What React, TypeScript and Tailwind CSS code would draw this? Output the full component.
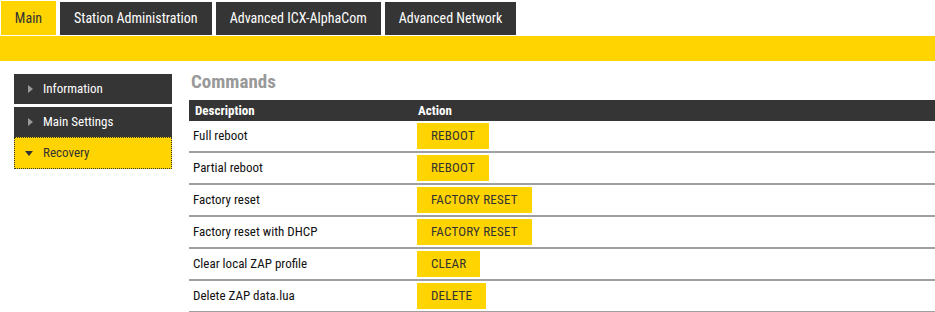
import React from 'react';

const tabs = ['Main', 'Station Administration', 'Advanced ICX-AlphaCom', 'Advanced Network'];

const rows = [
  { desc: 'Full reboot', action: 'REBOOT' },
  { desc: 'Partial reboot', action: 'REBOOT' },
  { desc: 'Factory reset', action: 'FACTORY RESET' },
  { desc: 'Factory reset with DHCP', action: 'FACTORY RESET' },
  { desc: 'Clear local ZAP profile', action: 'CLEAR' },
  { desc: 'Delete ZAP data.lua', action: 'DELETE' },
];

function Caret({ open }: { open?: boolean }) {
  if (open) {
    return (
      <svg width="8" height="5" viewBox="0 0 8 5" className="mr-[10px]">
        <path d="M0 0H8L4 5Z" fill="#333" />
      </svg>
    );
  }
  return (
    <svg width="5" height="8" viewBox="0 0 5 8" className="mr-[10px]">
      <path d="M0 0V8L5 4Z" fill="#9a9a9a" />
    </svg>
  );
}

export default function App() {
  return (
    <div
      className="w-[935px] h-[312px] bg-white text-[#222] overflow-hidden"
      style={{ fontFamily: '"Roboto Condensed", "Liberation Sans Narrow", Roboto, sans-serif' }}
    >
      {/* top tabs */}
      <div className="flex items-end h-[35px] pt-[1px] pl-[1px] gap-[4px]">
        {tabs.map((t, i) =>
          i === 0 ? (
            <div key={t} className="h-[34px] w-[55px] bg-[#ffd400] text-[#333] text-[14px] flex items-center justify-center">
              {t}
            </div>
          ) : (
            <div key={t} className="h-[33px] px-[14px] bg-[#353535] text-white text-[14px] flex items-center">
              {t}
            </div>
          )
        )}
      </div>
      <div className="mt-[1px] h-[25px] bg-[#ffd400]" />

      <div className="flex">
        {/* sidebar */}
        <div className="ml-[14px] mt-[13px] w-[158px] flex flex-col">
          <div className="h-[30px] bg-[#353535] text-white text-[13px] flex items-center pl-[14px]">
            <Caret />
            Information
          </div>
          <div className="mt-[3px] h-[30px] bg-[#353535] text-white text-[13px] flex items-center pl-[14px]">
            <Caret />
            Main Settings
          </div>
          <div className="h-[32px] bg-[#ffd400] text-[#333] text-[13px] flex items-center pl-[10px] border border-dotted border-[#333]">
            <Caret open />
            Recovery
          </div>
        </div>

        {/* content */}
        <div className="ml-[17px] flex-1">
          <div className="mt-[7px] ml-[2px] h-[32px] text-[19px] font-bold text-[#999] leading-[28px]">Commands</div>
          <div className="h-[21px] bg-[#353535] text-white text-[13px] font-bold flex items-center">
            <div className="w-[229px] pl-[6px]">Description</div>
            <div>Action</div>
          </div>
          {rows.map((r, i) => (
            <div key={i} className="h-[32px] flex items-center border-b-2 border-[#a0a0a0] text-[13px]">
              <div className="w-[228px] pl-[4px] text-[#111]">{r.desc}</div>
              <div className="h-[26px] px-[14px] bg-[#ffd400] text-[#333] flex items-center tracking-[0.2px]">
                {r.action}
              </div>
            </div>
          ))}
        </div>
      </div>
    </div>
  );
}
